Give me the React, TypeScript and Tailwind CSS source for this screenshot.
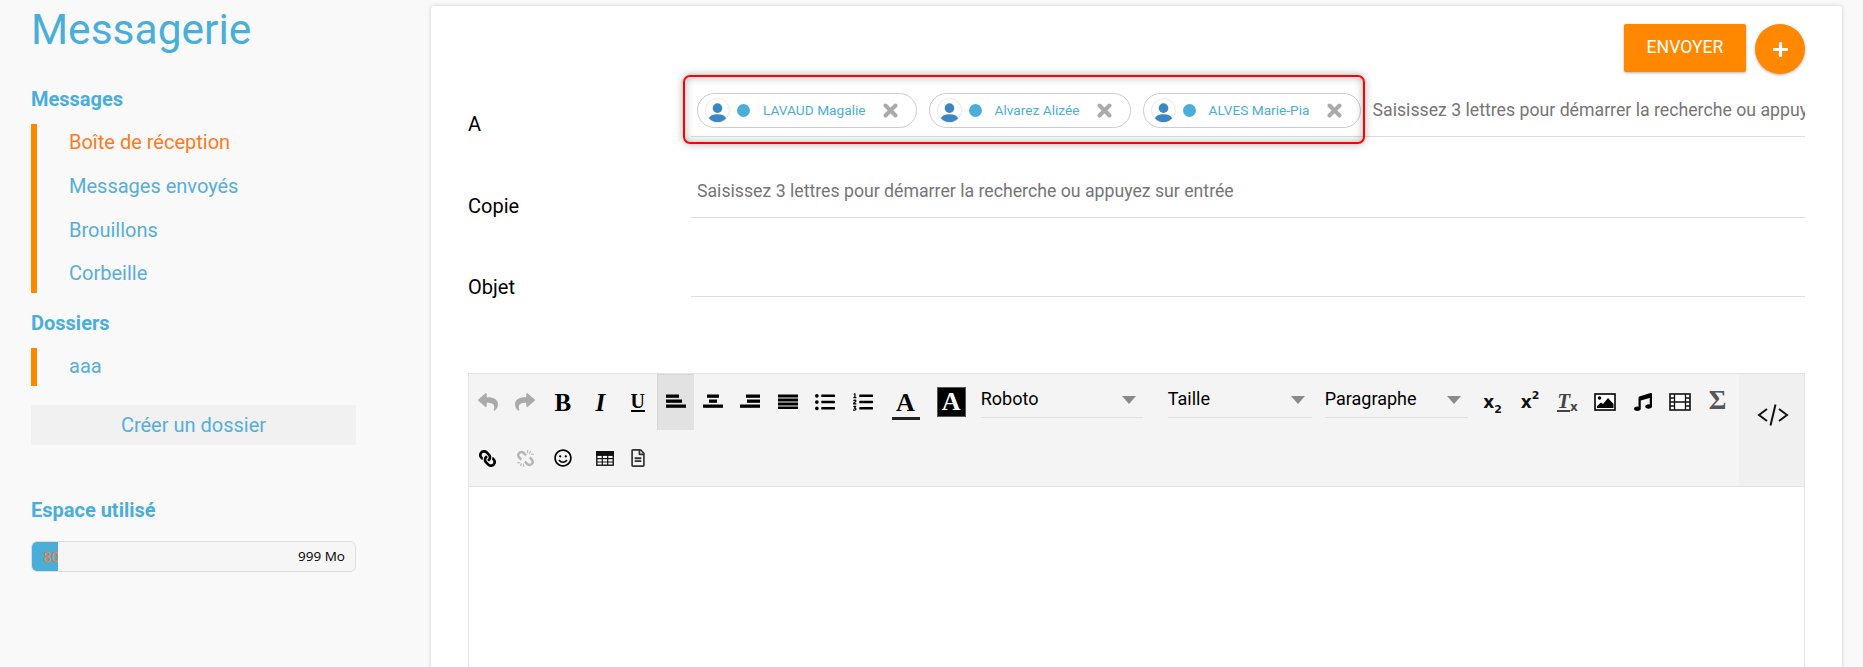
import React from "react";
import { FaReply, FaShare, FaListUl, FaListOl, FaLink, FaRegSmile, FaRegFileAlt, FaMusic, FaPlus } from "react-icons/fa";

const Person = () => (
  <span className="flex h-[25px] w-[25px] shrink-0 items-center justify-center overflow-hidden rounded-full border border-[#e8e8e8] bg-white">
    <svg width="24" height="24" viewBox="0 0 24 24">
      <circle cx="12" cy="9" r="5" fill="#3b87c4" />
      <ellipse cx="12" cy="20" rx="9" ry="4.6" fill="#3b87c4" />
    </svg>
  </span>
);

const Chip = ({ name }: { name: string }) => (
  <div className="flex h-[35px] shrink-0 items-center rounded-full border border-[#cccccc] bg-white pl-[7px] pr-[18px]">
    <Person />
    <span className="ml-[7px] h-[13px] w-[13px] shrink-0 rounded-full bg-[#4aaed9]" />
    <span className="ml-[13px] whitespace-nowrap text-[13.7px] text-[#4aaed9]">{name}</span>
    <svg className="ml-[17px] shrink-0" width="15" height="15" viewBox="0 0 15 15" stroke="#aaaaaa" strokeWidth="4" strokeLinecap="round">
      <path d="M2.5 2.5 L12.5 12.5 M12.5 2.5 L2.5 12.5" />
    </svg>
  </div>
);

const Bars = ({ rows }: { rows: [number, number][] }) => {
  const step = rows.length === 3 ? 5 : 4;
  const h = rows.length === 3 ? 3.3 : 3;
  return (
    <svg width="20" height="15" viewBox="0 0 20 15" fill="#000" className="mb-[2px]">
      {rows.map(([x, w], i) => (
        <rect key={i} x={x} y={i * step + 0.5} width={w} height={h} />
      ))}
    </svg>
  );
};

const Btn = ({ w, active, children }: { w: string; active?: boolean; children?: React.ReactNode }) => (
  <div className={`flex h-[56px] shrink-0 items-center justify-center ${w} ${active ? "bg-[#e2e2e2] border-l border-t border-[#d5d5d5]" : ""}`}>
    {children}
  </div>
);

const Select = ({ label, w, ml }: { label: string; w: string; ml: string }) => (
  <div className={`flex h-[44px] shrink-0 items-center justify-between self-start border-b border-[#e0e0e0] pr-[7px] text-[18px] text-black ${w} ${ml}`}>
    <span className="mt-[6px]">{label}</span>
    <span className="mt-[8px] h-0 w-0 border-x-[7px] border-t-[8px] border-x-transparent border-t-[#8a8a8a]" />
  </div>
);

const Serif = "font-['Liberation_Serif',serif]";

const navItems = [
  { t: "Boîte de réception", c: "text-[#ff7a1a] mt-[8px]" },
  { t: "Messages envoyés", c: "text-[#55aedb] mt-[24px]" },
  { t: "Brouillons", c: "text-[#55aedb] mt-[24px]" },
  { t: "Corbeille", c: "text-[#55aedb] mt-[23px] mb-[10px]" },
];

export default function App() {
  return (
    <div className="flex h-[667px] w-full overflow-hidden bg-[#f9f9f9] font-['Roboto',sans-serif]">
      <aside className="w-[431px] shrink-0 pl-[31px]">
        <div className="w-[325px]">
          <h1 className="mt-[5px] text-[42.5px] font-normal leading-[50px] text-[#4aaed9]">Messagerie</h1>
          <h2 className="mt-[34px] text-[20px] font-bold leading-[20px] text-[#4aaed9]">Messages</h2>
          <ul className="mt-[15px] flex flex-col border-l-[6px] border-[#ff8800] pl-[32px]">
            {navItems.map((n) => (
              <li key={n.t} className={`text-[20px] leading-[20px] ${n.c}`}>{n.t}</li>
            ))}
          </ul>
          <h2 className="mt-[20px] text-[20px] font-bold leading-[20px] text-[#4aaed9]">Dossiers</h2>
          <div className="mt-[15px] h-[38px] border-l-[6px] border-[#ff8800] pl-[32px] text-[20px] leading-[37px] text-[#55aedb]">aaa</div>
          <div className="mt-[19px] flex h-[40px] items-center justify-center rounded-[2px] bg-[#f1f1f1] pb-[1px] text-[20px] text-[#55aedb]">Créer un dossier</div>
          <h2 className="mt-[55px] text-[20px] font-bold leading-[20px] text-[#4aaed9]">Espace utilisé</h2>
          <div className="relative mt-[21px] flex h-[31px] items-center justify-end overflow-hidden rounded-[6px] border border-[#dddddd] bg-[#f6f6f6] pr-[10px] font-['Open_Sans',sans-serif] text-[13.5px] text-black">
            <div className="absolute left-0 top-0 h-full w-[26px] overflow-hidden bg-[#4aaed9] pl-[11px] text-[14px] leading-[29px] text-[#ff7a1a]">80</div>
            999 Mo
          </div>
        </div>
      </aside>

      <main className="relative mt-[6px] h-[700px] w-[1411px] shrink-0 rounded-[3px] bg-white pl-[37px] pr-[37px] shadow-[0_0_4px_rgba(0,0,0,0.18)]">
        <div className="flex justify-end gap-[9px] pt-[18px]">
          <div className="flex h-[48px] w-[122px] items-center justify-center rounded-[2px] bg-[#ff8800] pb-[2px] text-[17.6px] font-normal text-white shadow-[0_1px_3px_rgba(0,0,0,0.3)]">ENVOYER</div>
          <div className="flex h-[50px] w-[50px] items-center justify-center rounded-full bg-[#ff8800] text-white shadow-[0_1px_3px_rgba(0,0,0,0.3)]">
            <FaPlus size={17} />
          </div>
        </div>

        <div className="mt-[-1px] flex h-[64px] items-end">
          <label className="w-[223px] shrink-0 pb-[3px] text-[20px] leading-[20px] text-black">A</label>
          <div className="flex h-[63px] min-w-0 flex-1 items-start gap-[12px] overflow-hidden border-b border-[#dddddd] pl-[6px] pt-[19px]">
            <Chip name="LAVAUD Magalie" />
            <Chip name="Alvarez Alizée" />
            <Chip name="ALVES Marie-Pia" />
            <span className="whitespace-nowrap pt-[7px] text-[17.7px] leading-[20px] text-[#757575]">Saisissez 3 lettres pour démarrer la recherche ou appuyez sur entrée</span>
          </div>
        </div>

        <div className="mt-[17px] flex h-[64px] items-end">
          <label className="w-[223px] shrink-0 pb-[2px] text-[20px] leading-[20px] text-black">Copie</label>
          <div className="flex h-[64px] flex-1 items-start border-b border-[#dddddd] pl-[6px] pt-[27px] text-[17.7px] leading-[20px] text-[#757575]">Saisissez 3 lettres pour démarrer la recherche ou appuyez sur entrée</div>
        </div>

        <div className="mt-[14px] flex h-[65px] items-end">
          <label className="w-[223px] shrink-0 text-[20px] leading-[20px] text-black">Objet</label>
          <div className="h-[65px] flex-1 border-b border-[#dddddd]" />
        </div>

        <div className="mt-[76px] flex h-[113px] border-x border-t border-[#e3e3e3] bg-[#f4f4f4]">
          <div className="flex-1">
            <div className="flex h-[56px]">
              <Btn w="w-[37.5px]"><FaReply size={20} className="text-[#aaaaaa]" /></Btn>
              <Btn w="w-[37.5px]"><FaShare size={20} className="text-[#aaaaaa]" /></Btn>
              <Btn w="w-[37.5px]"><span className={`${Serif} text-[25px] font-bold leading-none text-black`}>B</span></Btn>
              <Btn w="w-[37.5px]"><span className={`${Serif} text-[25px] font-bold italic leading-none text-black`}>I</span></Btn>
              <Btn w="w-[37.5px]"><span className={`${Serif} border-b-2 border-black text-[20px] font-bold leading-[18px] text-black`}>U</span></Btn>
              <Btn w="w-[37.5px]" active><Bars rows={[[0, 13], [0, 16], [0, 20]]} /></Btn>
              <Btn w="w-[37.5px]"><Bars rows={[[4, 12], [6, 8], [0, 20]]} /></Btn>
              <Btn w="w-[37.5px]"><Bars rows={[[6, 14], [7, 13], [0, 20]]} /></Btn>
              <Btn w="w-[37.5px]"><Bars rows={[[0, 20], [0, 20], [0, 20], [0, 20]]} /></Btn>
              <Btn w="w-[37.5px]"><FaListUl size={20} className="text-black" /></Btn>
              <Btn w="w-[37.5px]"><FaListOl size={20} className="text-black" /></Btn>
              <Btn w="w-[48px]">
                <span className={`${Serif} mt-[5px] flex h-[30px] w-[28px] items-start justify-center border-b-[3px] border-[#222222] text-[26px] font-bold leading-[26px] text-black`}>A</span>
              </Btn>
              <Btn w="w-[43.5px]">
                <span className={`${Serif} flex h-[30px] w-[29px] items-center justify-center border border-[#555555] bg-black text-[26px] font-bold leading-none text-white`}>A</span>
              </Btn>
              <Select label="Roboto" w="w-[162px]" ml="ml-[7.75px]" />
              <Select label="Taille" w="w-[144px]" ml="ml-[25px]" />
              <Select label="Paragraphe" w="w-[143px]" ml="ml-[13px]" />
              <div className="ml-[6px] flex">
                <Btn w="w-[37.5px]"><span className="font-['DejaVu_Sans',sans-serif] text-[17px] font-bold leading-none text-[#111111]">x<sub className="text-[11px] align-[-3px]">2</sub></span></Btn>
                <Btn w="w-[37.5px]"><span className="font-['DejaVu_Sans',sans-serif] text-[17px] font-bold leading-none text-[#111111]">x<sup className="text-[11px] align-[3px]">2</sup></span></Btn>
                <Btn w="w-[37.5px]">
                  <span className="relative flex items-end">
                    <span className={`${Serif} border-b-2 border-[#444444] text-[21px] font-bold italic leading-[17px] text-[#444444]`}>T</span>
                    <span className="font-['DejaVu_Sans',sans-serif] text-[12px] font-bold leading-[10px] text-[#444444]">x</span>
                  </span>
                </Btn>
                <Btn w="w-[37.5px]">
                  <svg width="22" height="18" viewBox="0 0 22 18">
                    <rect x="1" y="1" width="20" height="16" fill="#fff" stroke="#000" strokeWidth="1.6" />
                    <circle cx="5.5" cy="5" r="1.8" fill="#000" />
                    <path d="M3 15 L3 13 L7 9.5 L9 11 L14 5 L19.5 11 L19.5 15 Z" fill="#000" />
                  </svg>
                </Btn>
                <Btn w="w-[37.5px]"><FaMusic size={18} className="text-black" /></Btn>
                <Btn w="w-[37.5px]">
                  <svg width="22" height="18" viewBox="0 0 22 18" fill="none" stroke="#111" strokeWidth="1.3">
                    <rect x="1" y="1" width="20" height="16" fill="#fff" strokeWidth="1.6" />
                    <path d="M5.5 1V17M16.5 1V17M1 9H21M1 5H5.5M1 13H5.5M16.5 5H21M16.5 13H21M5.5 9H16.5" />
                  </svg>
                </Btn>
                <Btn w="w-[37.5px]"><span className={`${Serif} -mt-[3px] text-[27px] font-bold leading-none text-[#555555]`}>Σ</span></Btn>
              </div>
            </div>
            <div className="flex h-[56px]">
              <Btn w="w-[37.5px]"><FaLink size={17} className="-scale-x-100 text-black" /></Btn>
              <Btn w="w-[37.5px]">
                <svg width="19" height="19" viewBox="0 0 18 18" fill="none" stroke="#b5b5b5">
                  <path strokeWidth="2.3" d="M9.5 6 L7 3.5 a3 3 0 0 0 -4.2 4.2 L5 10" />
                  <path strokeWidth="2.3" d="M8.5 12 L11 14.5 a3 3 0 0 0 4.2 -4.2 L13 8" />
                  <path strokeWidth="1" d="M11 1V4 M14 2 L12.5 4.5 M17 5 H14 M7 17V14 M4 16 L5.5 13.5 M1 13 H4" />
                </svg>
              </Btn>
              <Btn w="w-[37.5px]"><FaRegSmile size={18} className="text-black" /></Btn>
              <Btn w="w-[46px]">
                <svg width="18" height="15" viewBox="0 0 18 15" fill="none" stroke="#111" strokeWidth="1.2">
                  <rect x="0.8" y="0.8" width="16.4" height="13.4" fill="#fff" strokeWidth="1.4" />
                  <rect x="0.8" y="0.8" width="16.4" height="3.5" fill="#111" />
                  <path d="M6.3 1V14M11.7 1V14M1 7.6H17M1 11H17" />
                </svg>
              </Btn>
              <Btn w="w-[20.5px]"><FaRegFileAlt size={18} className="text-[#333333]" /></Btn>
            </div>
          </div>
          <div className="flex w-[65px] shrink-0 items-center justify-center bg-[#f0f0f0] pb-[31px] pl-[3px]">
            <svg width="32" height="24" viewBox="0 0 32 24" fill="none" stroke="#111" strokeWidth="2">
              <path d="M10 6 L2 12 L10 18M22 6 L30 12 L22 18M18.5 1.5 L13.5 22.5" />
            </svg>
          </div>
        </div>
        <div className="h-[200px] border border-[#e3e3e3] bg-white" />

        <div className="absolute left-[252px] top-[69px] h-[69px] w-[682px] rounded-[7px] border-2 border-[#ff0000] shadow-[0_0_8px_rgba(0,0,0,0.3),inset_0_0_8px_rgba(0,0,0,0.3)]" />
      </main>
    </div>
  );
}
